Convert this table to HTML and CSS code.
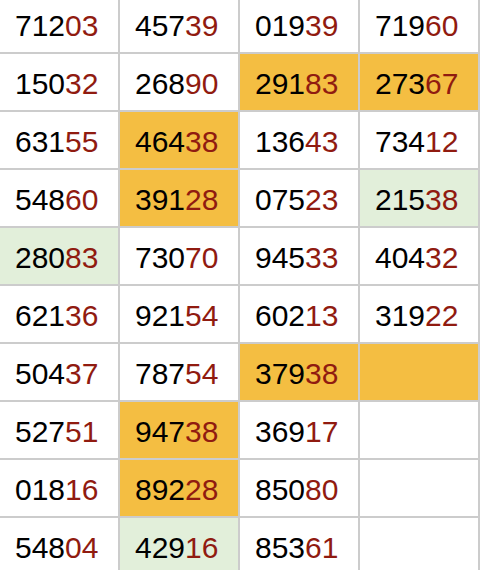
FILE: index.html
```html
<!DOCTYPE html>
<html>
<head>
<meta charset="utf-8">
<link rel="stylesheet" href="styles.css">
</head>
<body>
<div class="grid">
  <div class="cell">712<span class="r">03</span></div>
  <div class="cell">457<span class="r">39</span></div>
  <div class="cell">019<span class="r">39</span></div>
  <div class="cell">719<span class="r">60</span></div>

  <div class="cell">150<span class="r">32</span></div>
  <div class="cell">268<span class="r">90</span></div>
  <div class="cell hot">291<span class="r">83</span></div>
  <div class="cell hot">273<span class="r">67</span></div>

  <div class="cell">631<span class="r">55</span></div>
  <div class="cell hot">464<span class="r">38</span></div>
  <div class="cell">136<span class="r">43</span></div>
  <div class="cell">734<span class="r">12</span></div>

  <div class="cell">548<span class="r">60</span></div>
  <div class="cell hot">391<span class="r">28</span></div>
  <div class="cell">075<span class="r">23</span></div>
  <div class="cell mint">215<span class="r">38</span></div>

  <div class="cell mint">280<span class="r">83</span></div>
  <div class="cell">730<span class="r">70</span></div>
  <div class="cell">945<span class="r">33</span></div>
  <div class="cell">404<span class="r">32</span></div>

  <div class="cell">621<span class="r">36</span></div>
  <div class="cell">921<span class="r">54</span></div>
  <div class="cell">602<span class="r">13</span></div>
  <div class="cell">319<span class="r">22</span></div>

  <div class="cell">504<span class="r">37</span></div>
  <div class="cell">787<span class="r">54</span></div>
  <div class="cell hot">379<span class="r">38</span></div>
  <div class="cell hot"></div>

  <div class="cell">527<span class="r">51</span></div>
  <div class="cell hot">947<span class="r">38</span></div>
  <div class="cell">369<span class="r">17</span></div>
  <div class="cell"></div>

  <div class="cell">018<span class="r">16</span></div>
  <div class="cell hot">892<span class="r">28</span></div>
  <div class="cell">850<span class="r">80</span></div>
  <div class="cell"></div>

  <div class="cell">548<span class="r">04</span></div>
  <div class="cell mint">429<span class="r">16</span></div>
  <div class="cell">853<span class="r">61</span></div>
  <div class="cell"></div>
</div>
</body>
</html>
```
FILE: styles.css
```css
html, body {
  margin: 0;
  padding: 0;
  width: 480px;
  height: 570px;
  overflow: hidden;
  background: #ffffff;
}
.grid {
  margin-top: -4px;
  display: grid;
  grid-template-columns: repeat(4, 118px);
  grid-auto-rows: 56px;
  gap: 2px;
  padding: 0 2px 2px 0;
  width: 478px;
  background: #cccccc;
  font-family: "Liberation Sans", Arial, Helvetica, sans-serif;
  font-size: 30px;
  color: #000000;
}
.cell {
  background: #ffffff;
  display: flex;
  align-items: center;
  padding: 4px 0 0 15px;
  box-sizing: border-box;
}
.cell.hot {
  background: #f4be42;
}
.cell.mint {
  background: #e2efda;
}
.r {
  color: #901b10;
}
```
